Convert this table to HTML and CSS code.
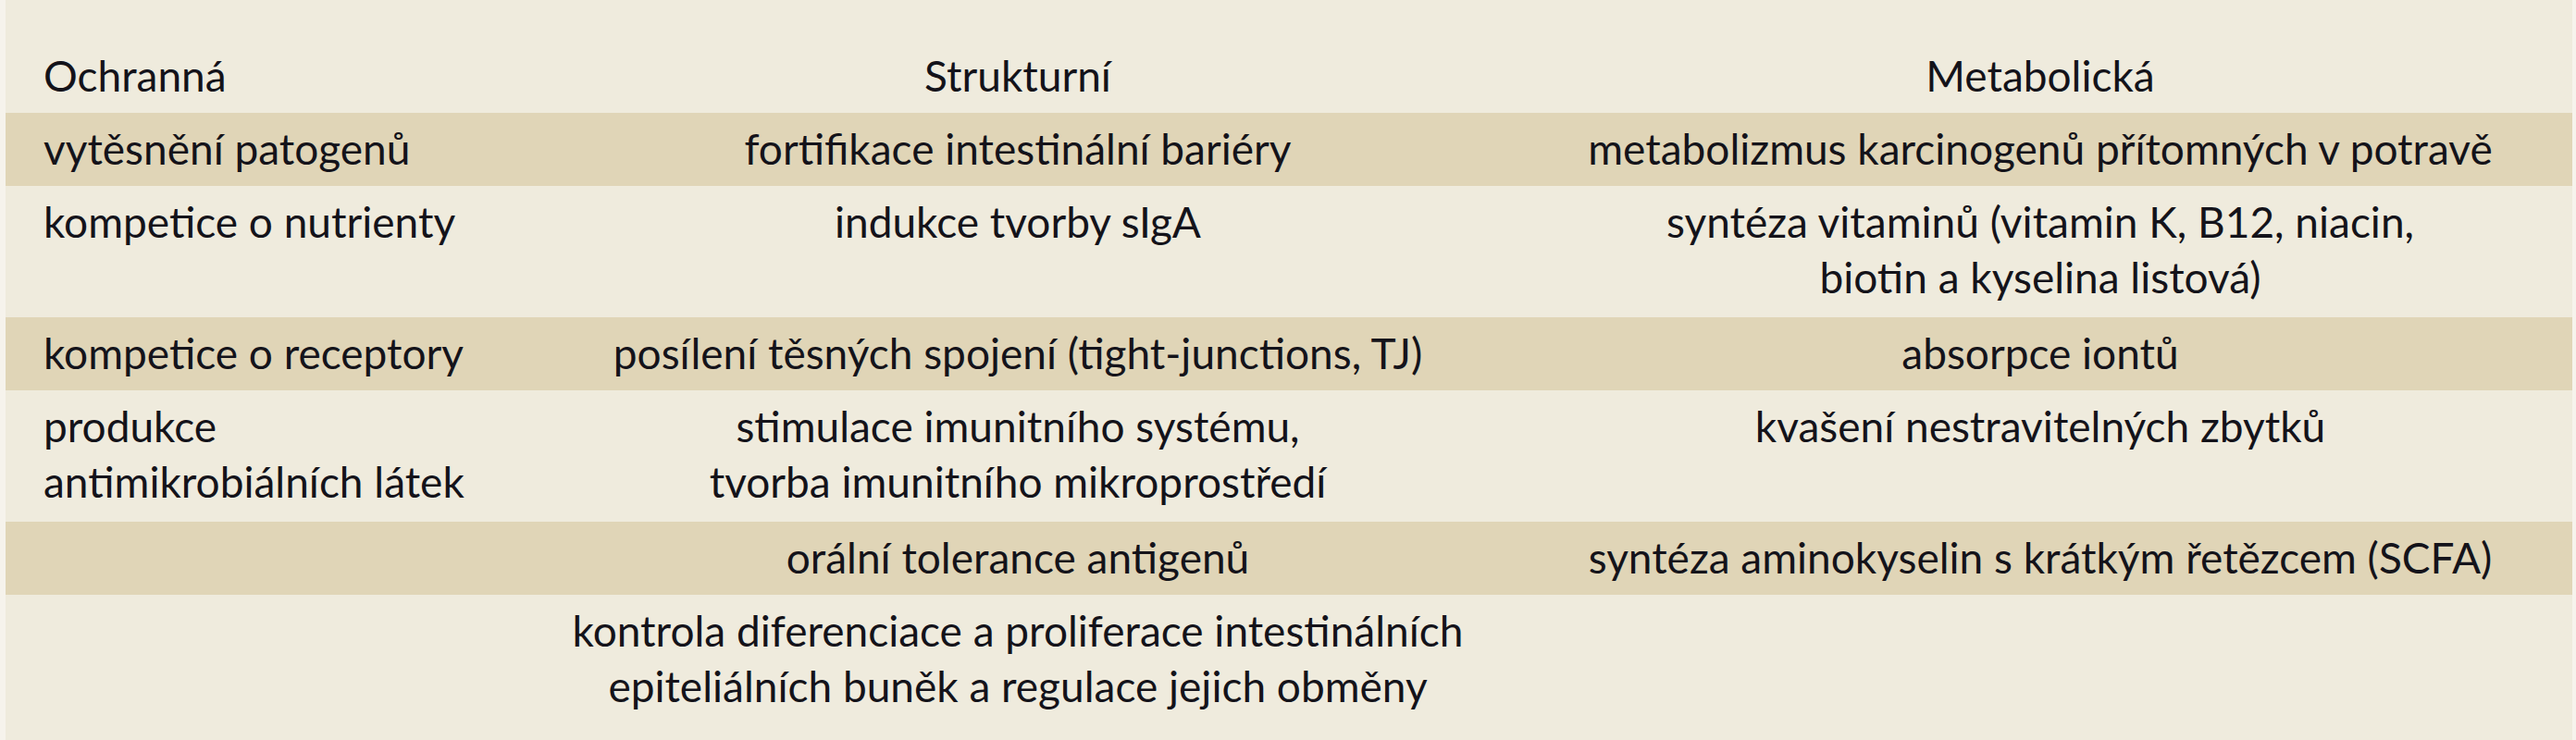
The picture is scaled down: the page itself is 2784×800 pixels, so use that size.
FILE: index.html
```html
<!DOCTYPE html>
<html lang="cs">
<head>
<meta charset="utf-8">
<title>Funkce střevní mikroflóry</title>
<link rel="stylesheet" href="styles.css">
</head>
<body>
<table class="tbl">
  <colgroup>
    <col class="c1">
    <col class="c2">
    <col class="c3">
  </colgroup>
  <thead>
    <tr class="head">
      <th class="left">Ochranná</th>
      <th>Strukturní</th>
      <th>Metabolická</th>
    </tr>
  </thead>
  <tbody>
    <tr class="shade">
      <td class="left">vytěsnění patogenů</td>
      <td>fortifikace intestinální bariéry</td>
      <td>metabolizmus karcinogenů přítomných v potravě</td>
    </tr>
    <tr class="two">
      <td class="left">kompetice o nutrienty</td>
      <td>indukce tvorby sIgA</td>
      <td>syntéza vitaminů (vitamin K, B12, niacin,<br>biotin a kyselina listová)</td>
    </tr>
    <tr class="shade">
      <td class="left">kompetice o receptory</td>
      <td>posílení těsných spojení (tight-junctions, TJ)</td>
      <td>absorpce iontů</td>
    </tr>
    <tr class="two">
      <td class="left">produkce<br>antimikrobiálních látek</td>
      <td>stimulace imunitního systému,<br>tvorba imunitního mikroprostředí</td>
      <td>kvašení nestravitelných zbytků</td>
    </tr>
    <tr class="shade">
      <td class="left"></td>
      <td>orální tolerance antigenů</td>
      <td>syntéza aminokyselin s krátkým řetězcem (SCFA)</td>
    </tr>
    <tr class="last">
      <td class="left"></td>
      <td>kontrola diferenciace a proliferace intestinálních<br>epiteliálních buněk a regulace jejich obměny</td>
      <td></td>
    </tr>
  </tbody>
</table>
</body>
</html>
```
FILE: styles.css
```css
html, body {
  margin: 0;
  padding: 0;
  background: #f6f3ec;
}
body {
  padding: 0 4px 0 6px;
  font-family: "Lato", "Liberation Sans", sans-serif;
  font-size: 46px;
  color: #14131a;
}
.tbl {
  width: 2774px;
  border-collapse: collapse;
  table-layout: fixed;
  background: #efebdd;
}
.c1 { width: 564px; }
.c2 { width: 1060px; }
.c3 { width: 1150px; }
th, td {
  font-weight: normal;
  line-height: 60px;
  padding: 9px 20px 10px;
  text-align: center;
  vertical-align: top;
  white-space: nowrap;
}
.left {
  text-align: left;
  padding-left: 41px;
}
.head th {
  padding-top: 52px;
  padding-bottom: 10px;
}
.shade {
  background: #e0d5b7;
}
.two {
  height: 142px;
}
.last {
  height: 157px;
}
```
